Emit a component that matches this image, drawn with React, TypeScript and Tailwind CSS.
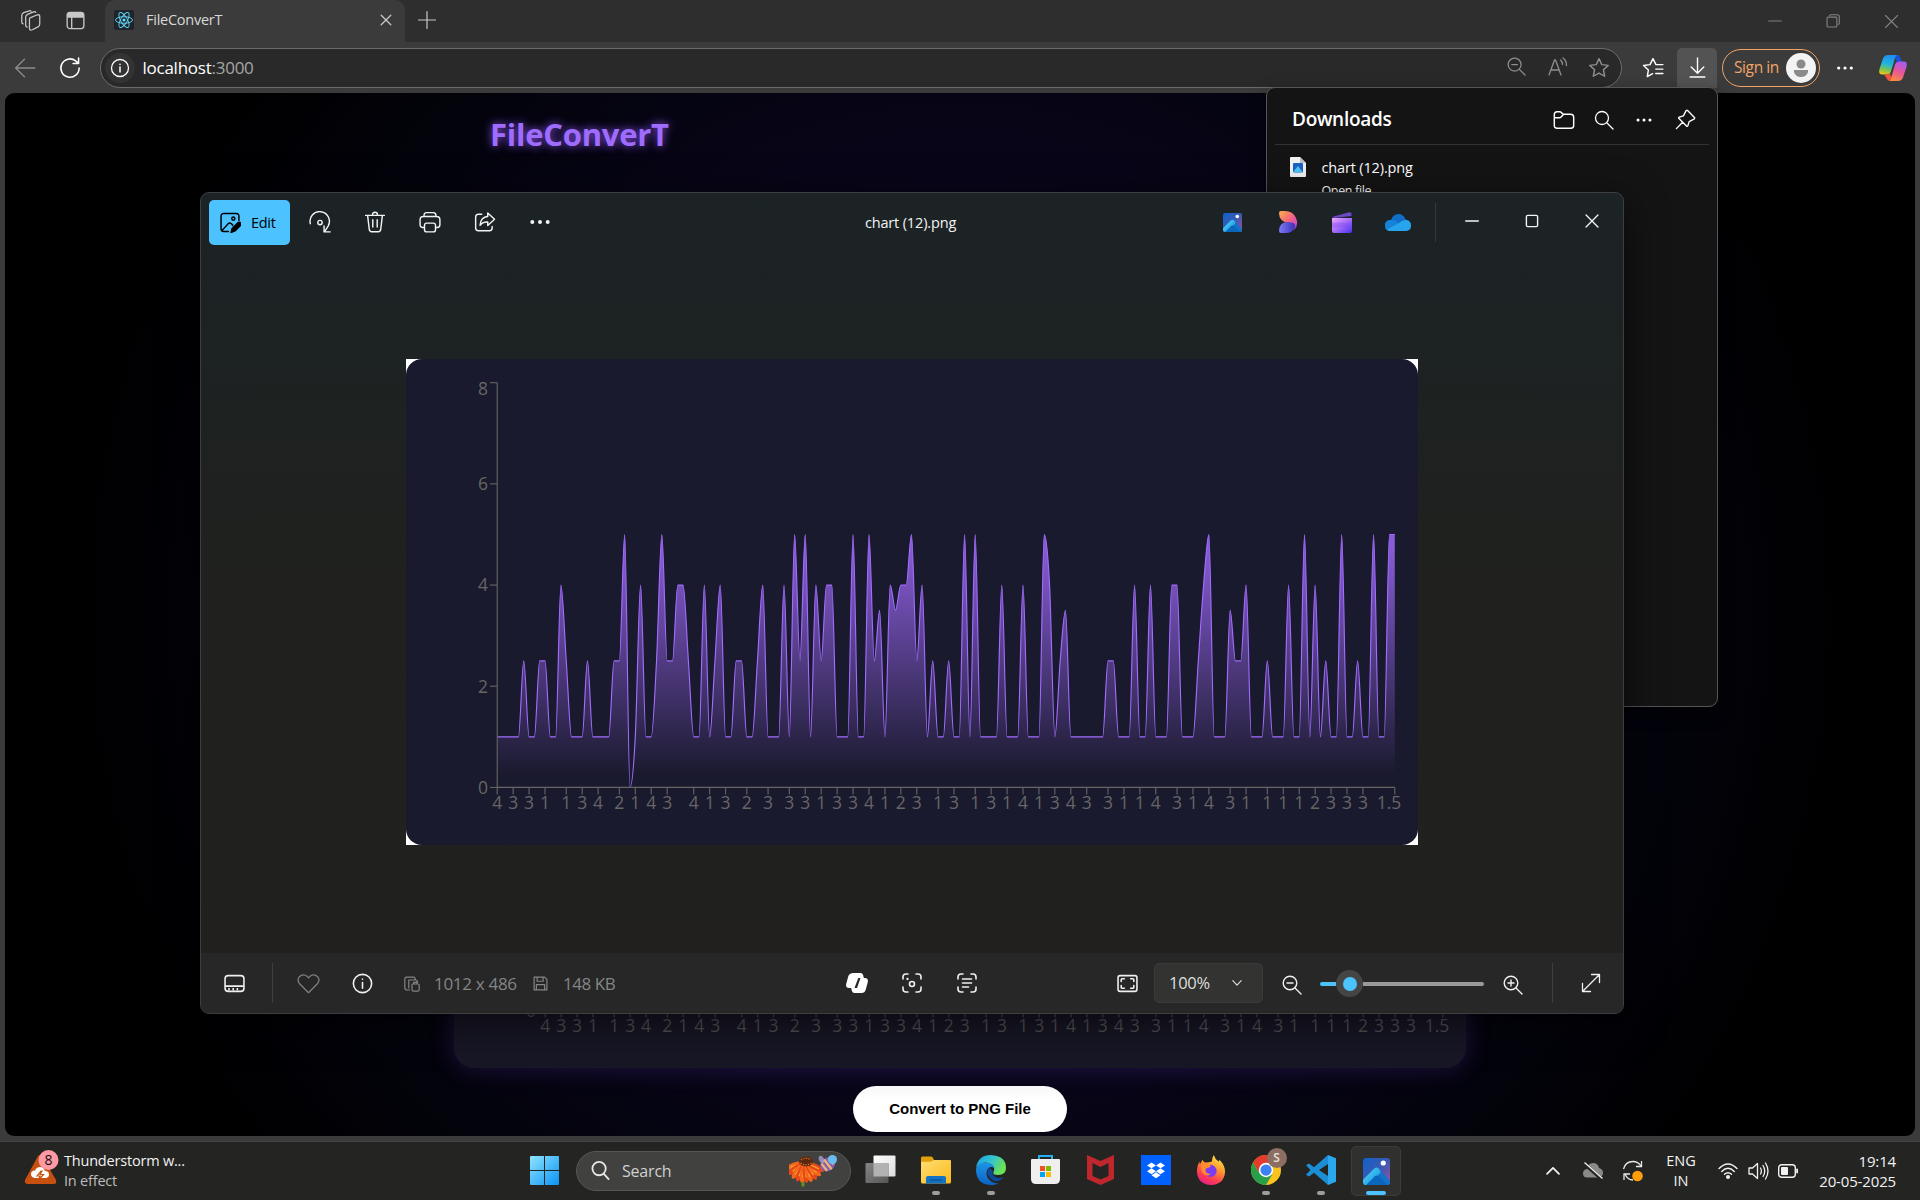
import React from "react";

type IconProps = { size?: number; className?: string; sw?: number; children?: React.ReactNode };

function Icon({ size = 20, className = "", sw = 1.3, children }: IconProps) {
  return (
    <svg width={size} height={size} viewBox="0 0 20 20" fill="none" stroke="currentColor" strokeWidth={sw} strokeLinecap="round" strokeLinejoin="round" className={"shrink-0 " + className}>
      {children}
    </svg>
  );
}

function Dots({ className = "" }: { className?: string }) {
  return (
    <Icon className={className}>
      <g fill="currentColor" stroke="none"><circle cx="3" cy="10" r="1.8" /><circle cx="10" cy="10" r="1.8" /><circle cx="17" cy="10" r="1.8" /></g>
    </Icon>
  );
}

/* ---------- chart ---------- */

// [value, how many consecutive samples hold it]
const runs: [number, number][] = [
  [1, 5], [2.5, 1], [1, 2], [2.5, 2], [1, 2], [4, 1], [2.5, 1], [1, 3], [2.5, 1], [1, 4], [2.5, 2], [5, 1], [0, 1], [1, 1], [4, 1],
  [1, 2], [2.5, 1], [5, 1], [2.5, 2], [4, 2], [2.5, 1], [1, 2], [4, 1], [1, 1], [2.5, 1], [4, 1], [1, 2], [2.5, 2], [1, 2], [2.5, 1],
  [4, 1], [1, 3], [4, 1], [1, 1], [5, 1], [2.5, 1], [5, 1], [1, 1], [4, 1], [2.5, 1], [4, 2], [1, 3], [5, 1], [1, 2], [5, 1], [2.5, 1],
  [3.5, 1], [1, 1], [4, 1], [3.5, 1], [4, 2], [5, 1], [2.5, 1], [4, 1], [1, 1], [2.5, 1], [1, 2], [2.5, 1], [1, 2], [5, 1], [1, 1], [5, 1],
  [1, 4], [4, 1], [1, 3], [4, 1], [1, 3], [5, 1], [4, 1], [1, 1], [2.5, 1], [3.5, 1], [1, 7], [2.5, 2], [1, 3], [4, 1], [1, 2], [4, 1],
  [1, 3], [4, 2], [1, 3], [2.5, 1], [4, 1], [5, 1], [1, 3], [3.5, 1], [2.5, 2], [4, 1], [1, 3], [2.5, 1], [1, 3], [4, 1], [1, 2], [5, 1],
  [1, 1], [4, 1], [1, 1], [2.5, 1], [1, 2], [5, 1], [1, 2], [2.5, 1], [1, 2], [5, 1], [1, 2], [5, 2],
];
const values = runs.flatMap(([v, n]) => Array<number>(n).fill(v));

const ticks: [number, string][] = [
  [0, "4"], [3, "3"], [6, "3"], [9, "1"], [13, "1"], [16, "3"], [19, "4"], [23, "2"], [26, "1"], [29, "4"], [32, "3"], [37, "4"], [40, "1"],
  [43, "3"], [47, "2"], [51, "3"], [55, "3"], [58, "3"], [61, "1"], [64, "3"], [67, "3"], [70, "4"], [73, "1"], [76, "2"], [79, "3"],
  [83, "1"], [86, "3"], [90, "1"], [93, "3"], [96, "1"], [99, "4"], [102, "1"], [105, "3"], [108, "4"], [111, "3"], [115, "3"], [118, "1"],
  [121, "1"], [124, "4"], [128, "3"], [131, "1"], [134, "4"], [138, "3"], [141, "1"], [145, "1"], [148, "1"], [151, "1"], [154, "2"],
  [157, "3"], [160, "3"], [163, "3"], [169, "1.5"],
];

const X0 = 91.2;
const X1 = 988.8;
const Y0 = 428.4;
const Y8 = 23.7;
const px = (i: number) => X0 + ((X1 - X0) * i) / 169;
const py = (v: number) => Y0 - ((Y0 - Y8) * v) / 8;

function monotonePath(vals: number[]) {
  const h = px(1) - px(0);
  const ys = vals.map(py);
  const n = ys.length;
  const s = ys.slice(1).map((y, i) => (y - ys[i]) / h);
  const m = ys.map((_, i) => {
    if (i === 0 || i === n - 1) return 0;
    const a = s[i - 1];
    const b = s[i];
    return (Math.sign(a) + Math.sign(b)) * Math.min(Math.abs(a), Math.abs(b), 0.5 * Math.abs((a + b) / 2)) || 0;
  });
  let d = `M${px(0).toFixed(2)},${ys[0].toFixed(2)}`;
  for (let i = 1; i < n; i++) {
    const a = px(i - 1);
    const b = px(i);
    d += `C${(a + h / 3).toFixed(2)},${(ys[i - 1] + (m[i - 1] * h) / 3).toFixed(2)} ${(b - h / 3).toFixed(2)},${(ys[i] - (m[i] * h) / 3).toFixed(2)} ${b.toFixed(2)},${ys[i].toFixed(2)}`;
  }
  return d;
}
const line = monotonePath(values);

function Chart({ id, yLabels }: { id: string; yLabels: number[] }) {
  return (
    <svg width="1012" height="486" viewBox="0 0 1012 486" className="block">
      <defs>
        <linearGradient id={id} x1="0" y1="0" x2="0" y2="1">
          <stop offset="5%" stopColor="#a26cff" stopOpacity="0.8" />
          <stop offset="95%" stopColor="#a26cff" stopOpacity="0" />
        </linearGradient>
      </defs>
      <path d={`${line}L${X1},${Y0}L${X0},${Y0}Z`} fill={`url(#${id})`} />
      <path d={line} fill="none" stroke="#a26cff" strokeWidth="1.15" />
      <g stroke="#666" strokeWidth="1.1">
        <path d={`M${X0},${Y8}V${Y0}H${X1}`} fill="none" />
        {[0, 2, 4, 6, 8].map((v) => <path key={v} d={`M84,${py(v)}H${X0}`} />)}
        {ticks.map(([i]) => <path key={i} d={`M${px(i)},${Y0}v7`} />)}
      </g>
      <g fill="#666" fontSize="17.5">
        {yLabels.map((v) => <text key={v} x="82" y={v === 8 ? 36 : py(v) + 6.3} textAnchor="end">{v}</text>)}
        {ticks.map(([i, t]) => <text key={i} x={i === 169 ? 983 : px(i)} y="450" textAnchor="middle">{t}</text>)}
      </g>
    </svg>
  );
}

/* ---------- shared drawings ---------- */

function PhotosIcon({ size }: { size: number }) {
  return (
    <svg width={size} height={size} viewBox="0 0 26 26" className="shrink-0">
      <defs>
        <linearGradient id="phBg" x1="0" y1="0" x2="1" y2="1"><stop stopColor="#0f62c8" /><stop offset=".5" stopColor="#3a5ab4" /><stop offset="1" stopColor="#9a529c" /></linearGradient>
        <linearGradient id="phM" x1="0" y1="0" x2="1" y2="1"><stop stopColor="#5be0fb" /><stop offset="1" stopColor="#0a86dc" /></linearGradient>
        <clipPath id="phClip"><rect width="26" height="26" rx="3" /></clipPath>
      </defs>
      <g clipPath="url(#phClip)">
        <rect width="26" height="26" fill="url(#phBg)" />
        <path d="M11 10q2-2 4 0L27 23v5H16z" fill="#1173c9" />
        <path d="M-1 22L11 10q2-1.800 4 0l1.500 2q1 1.500-.3 3L3 28h-4z" fill="url(#phM)" />
        <path d="M2 27l9.500-9.500q1.800-1.500 3.600 0L25 27z" fill="#0b66bd" />
        <circle cx="19.500" cy="4.800" r="2.500" fill="#fff" />
      </g>
    </svg>
  );
}

function Copilot() {
  return (
    <svg width="28" height="26" viewBox="0 0 28 26" className="shrink-0">
      <defs>
        <linearGradient id="cpA" x1=".4" y1="0" x2=".2" y2="1"><stop stopColor="#1e8ff0" /><stop offset=".45" stopColor="#22b6d8" /><stop offset=".75" stopColor="#7fc64a" /><stop offset="1" stopColor="#f5c518" /></linearGradient>
        <linearGradient id="cpB" x1=".7" y1="0" x2=".3" y2="1"><stop stopColor="#a45cf0" /><stop offset=".5" stopColor="#e8569a" /><stop offset="1" stopColor="#fb8a3c" /></linearGradient>
      </defs>
      <path d="M15 0h3.500q2 0 2.700 2l1.500 5h-5z" fill="#1b4fd8" />
      <path d="M9 0h9q-1.500 1-2.200 3.500l-4 13.500q-.9 2.500-3.500 2.500H3Q-.8 19.500.5 14L4 3.500Q5.300 0 9 0z" fill="url(#cpA)" />
      <path d="M19 26H10q1.500-1 2.200-3.500l4-13.500Q17.100 6.500 19.700 6.500H25q3.800 0 2.500 5.500L24 22.500Q22.700 26 19 26z" fill="url(#cpB)" />
      <path d="M5 19.500h4.500l1.500-1 1.200 3.500-1 4q-2.700 0-3.700-3z" fill="#f2533c" />
    </svg>
  );
}

function ReactLogo() {
  return (
    <svg width="20" height="20" viewBox="0 0 20 20">
      <rect width="20" height="20" rx="2" fill="#20232a" />
      <g fill="none" stroke="#61dafb" strokeWidth=".9">
        <ellipse cx="10" cy="10" rx="8.500" ry="3.300" />
        <ellipse cx="10" cy="10" rx="8.500" ry="3.300" transform="rotate(60 10 10)" />
        <ellipse cx="10" cy="10" rx="8.500" ry="3.300" transform="rotate(120 10 10)" />
      </g>
      <circle cx="10" cy="10" r="1.600" fill="#61dafb" />
    </svg>
  );
}

/* ---------- browser ---------- */

function TitleBar() {
  return (
    <div className="flex h-[42px] shrink-0 items-stretch bg-[#2e2e2e] text-[#c8c8c8]">
      <div className="flex w-[105px] items-center pb-[2px] pl-[20px]">
        <Icon size={21} sw={1.2}>
          <path d="M9.500 7.500l6.500-2.700q2.800-1 2.800 1.500v7q0 2-1.700 2.800l-5.300 2.700q-2.800 1.200-2.800-1.500V9.300q0-1.200.5-1.800zM5.400 14.500V7q0-2 1.800-2.800l5.800-2.400q1.500-.5 2 .5M1.700 11.500V5.200q0-1.800 1.800-2.700L9 .8q1-.3 1.500.3M5.400 14.500q0 1.500 1.500 1.700M1.700 11.500q0 1.500 1.300 1.800" />
        </Icon>
        <Icon size={19} sw={1.4} className="ml-[25px]">
          <rect x="1.200" y="1.500" width="17.600" height="17" rx="3" /><path d="M2 2.500h16v3.800H2z" fill="currentColor" /><path d="M6 6v12" />
        </Icon>
      </div>
      <div className="flex w-[300px] items-center rounded-t-[10px] bg-[#3b3b3b] pb-[3px] pl-[9px] pr-[11px]">
        <ReactLogo />
        <span className="ml-[12px] flex-1 text-[14.500px] tracking-[-0.250px] text-[#d8d8d8]">FileConverT</span>
        <Icon size={16} sw={1.6}><path d="M4 4l12 12M16 4L4 16" /></Icon>
      </div>
      <div className="flex w-[44px] items-center justify-center pb-[3px]"><Icon size={20} sw={1.2}><path d="M10 1.500v17M1.500 10h17" /></Icon></div>
      <div className="ml-auto flex items-center text-[#828282]">
        <div className="flex w-[58px] justify-center"><Icon size={14} sw={1.4}><path d="M1 10h18" /></Icon></div>
        <div className="flex w-[58px] justify-center"><Icon size={14} sw={1.6}><rect x="1.500" y="4.500" width="14" height="14" rx="1.500" /><path d="M5 2q.5-1 2-1h9q3 0 3 3v9q0 1.500-1.500 2" /></Icon></div>
        <div className="flex w-[58px] justify-center"><Icon size={15} sw={1.5}><path d="M2 2l16 16M18 2L2 18" /></Icon></div>
      </div>
    </div>
  );
}

const STAR = "M10 1.500l2.500 5.400 5.900.7-4.400 4 1.200 5.900L10 14.600l-5.200 2.900L6 11.600l-4.400-4 5.900-.7z";

function Toolbar() {
  return (
    <div className="flex h-[51px] shrink-0 items-center bg-[#3b3b3b] text-white">
      <div className="flex w-[50px] justify-center"><Icon size={22} className="text-[#8c8c8c]" sw={1.2}><path d="M19 10H1.500M9.500 2L1.500 10l8 8" /></Icon></div>
      <div className="flex w-[40px] justify-center"><Icon size={22} sw={1.4}><path d="M18.300 10a8.300 8.300 0 1 1-3.200-6.500l2.500 2.300M17.800 1v5h-5" /></Icon></div>
      <div className="ml-[10px] flex h-[40px] w-[1522px] items-center rounded-full border border-[#6c6c6c] bg-[#292929] pl-[4px] pr-[2px]">
        <div className="flex h-[30px] w-[30px] items-center justify-center rounded-full bg-[#333]">
          <Icon size={20}><circle cx="10" cy="10" r="8.500" /><path d="M10 9v5M10 6.300v.2" strokeWidth="1.500" /></Icon>
        </div>
        <span className="ml-[7.500px] flex-1 text-[17px] tracking-[-0.250px]">localhost<span className="text-[#a5a5a5]">:3000</span></span>
        <div className="flex text-[#8f8f8f]">
          <div className="flex w-[41px] justify-center"><Icon size={19}><circle cx="8" cy="8" r="6.800" /><path d="M13 13l6 6M5 8h6" /></Icon></div>
          <div className="flex w-[41px] justify-center"><Icon><path d="M1 18L6.500 3h1L13 18M3 13h8M12.500 3q2 1.500 2 4.500M15 1q3.500 2.500 3.500 7.500" /></Icon></div>
          <div className="flex w-[41px] justify-center"><Icon size={22}><path d={STAR} /></Icon></div>
        </div>
      </div>
      <div className="ml-[8px] flex w-[46px] justify-center">
        <Icon size={22}><path d="M9.700 15.200l-4.900 2.600 1-5.900-4.400-4.200 5.900-.8L10 1.500l2.700 5.400H19M12.500 11h6.500M12.500 15h6.500" /></Icon>
      </div>
      <div className="ml-[1px] flex h-[40px] w-[40px] items-center justify-center rounded-t-[5px] bg-[#535353]">
        <Icon size={21}><path d="M10 1v14M4 9.500l6 6 6-6M3 19h14" /></Icon>
      </div>
      <div className="ml-[5px] flex h-[38px] w-[98px] items-center justify-between rounded-full border-[1.500px] border-[#f0a467] pl-[11px] pr-[3px]">
        <span className="whitespace-nowrap text-[15.500px] tracking-[-0.400px] text-[#f0a467]">Sign in</span>
        <svg width="30" height="30" viewBox="0 0 30 30" className="shrink-0"><circle cx="15" cy="15" r="15" fill="#f3f3f3" /><circle cx="15" cy="11" r="4.500" fill="#8a8a8a" /><path d="M8 17h14v2q-1.500 5-7 5t-7-5z" fill="#8a8a8a" /></svg>
      </div>
      <div className="flex w-[50px] justify-center"><Dots className="scale-[0.9]" /></div>
      <div className="ml-[9px]"><Copilot /></div>
    </div>
  );
}

function WebPage() {
  return (
    <div className="flex h-[1043px] flex-col items-center overflow-hidden rounded-[9px] bg-[radial-gradient(circle_at_center,#090720_20%,#070516_46%,#03030c_64%,#000_83%)]">
      <div className="flex h-[82px] w-[940px] items-center">
        <h1 className="text-[31px] font-bold tracking-[-0.250px] text-[#a06cff] [text-shadow:0_0_10px_#8a55f0]">FileConverT</h1>
      </div>
      <div className="mt-[407px] h-[486px] w-[1012px] shrink-0 rounded-[20px] bg-[#181726] shadow-[0_0_25px_rgba(125,80,230,0.25)]">
        <div className="opacity-75"><Chart id="pageFill" yLabels={[0]} /></div>
      </div>
      <button className="mt-[18px] h-[46px] w-[214px] shrink-0 rounded-[23px] bg-[linear-gradient(#f7f7f7,#fff_30%)] font-['Liberation_Sans',Arial,sans-serif] text-[15px] font-bold text-black">Convert to PNG File</button>
    </div>
  );
}

function Downloads() {
  return (
    <div className="absolute left-[1266px] top-[87px] h-[620px] w-[452px] rounded-[9px] border border-[#565656] bg-[#141414] px-[8px] text-white shadow-[0_6px_16px_rgba(0,0,0,0.5)]">
      <div className="flex h-[57px] items-center border-b border-[#333] pl-[17px] pr-[3px] pt-[7px]">
        <span className="flex-1 text-[19px] font-semibold tracking-[-0.300px]">Downloads</span>
        <div className="flex w-[40px] justify-center"><Icon size={22}><path d="M1.200 5q0-2.500 2.500-2.500H6q1 0 1.700.8l1.500 1.500H16q2.800 0 2.800 2.700V15q0 2.500-2.500 2.500H3.700q-2.500 0-2.500-2.500zM1.200 8h4.500q1 0 1.700-.8l1.900-2" /></Icon></div>
        <div className="flex w-[40px] justify-center"><Icon size={20}><circle cx="8" cy="8" r="6.500" /><path d="M13 13l6 6" /></Icon></div>
        <div className="flex w-[40px] justify-center"><Dots className="scale-[0.85]" /></div>
        <div className="flex w-[42px] justify-center"><Icon size={21}><path d="M12 1.500L18.500 8q.7 1-.5 1.700L13.500 12l-1.300 4q-.5 1-1.300.2L3.800 9.100Q3 8.300 4 7.800l4-1.300L10.300 2q.7-1.200 1.700-.5zM7.300 12.700L1.300 18.700" /></Icon></div>
      </div>
      <div className="flex pl-[14.500px] pt-[12px]">
        <svg width="16" height="20" viewBox="0 0 16 20"><path d="M0 1q0-1 1-1h9l6 6v13q0 1-1 1H1q-1 0-1-1z" fill="#f2f2f2" /><path d="M10 0v6h6z" fill="#b9c2cc" /><rect x="3" y="6" width="10" height="9.500" rx="1" fill="#1b62c4" /><path d="M3 15l5-6 5 6.500z" fill="#4dc3f5" /></svg>
        <div className="ml-[16px] flex flex-col">
          <span className="text-[14.500px] leading-[22px] tracking-[-0.150px]">chart (12).png</span>
          <span className="mt-[3px] text-[12.500px] leading-[18px] tracking-[-0.350px]">Open file</span>
        </div>
      </div>
    </div>
  );
}

/* ---------- photo viewer ---------- */

function Slot({ children, w = "w-[55px]" }: { children: React.ReactNode; w?: string }) {
  return <div className={"flex shrink-0 items-center justify-center " + w}>{children}</div>;
}

function PhotoWindow() {
  return (
    <div className="absolute left-[200px] top-[192px] flex h-[822px] w-[1424px] flex-col overflow-hidden rounded-[9px] border border-[#3d3e40] bg-[linear-gradient(180deg,#1c2326_0%,#1d2222_20%,#20211e_50%,#21201e_100%)] text-[#f3f3f3] shadow-[0_10px_40px_rgba(0,0,0,0.6)]">
      <div className="grid h-[60px] shrink-0 grid-cols-[1fr_auto_1fr] items-center pb-[2px]">
        <div className="flex items-center pl-[8px]">
          <div className="flex h-[45px] w-[81px] items-center rounded-[5px] bg-[#4cc2ff] pl-[11px] text-black">
            <Icon size={21} sw={1.4}>
              <path d="M18 8V4q0-2.500-2.500-2.500h-12Q1 1.500 1 4v12q0 2.500 2.500 2.500H8M2 17.500l6-6.500q1.300-1.300 2.600 0l1.500 1.500" /><circle cx="12.700" cy="6.300" r="1.500" />
              <path d="M10.500 19.500l1.200-4L17 10.300q1.500-1.200 2.500 0t0 2.500L14.300 18z" fill="currentColor" />
            </Icon>
            <span className="ml-[10px] pt-[1px] text-[14.500px] tracking-[-0.300px]">Edit</span>
          </div>
          <div className="ml-[2px] flex">
            <Slot><Icon size={22}><path d="M1.200 11.500a8.800 8.800 0 1 1 16.200 2.200l-3.200 5M13.700 13.500v5.500h5.500" /><circle cx="10" cy="10.500" r="2" /></Icon></Slot>
            <Slot><Icon size={22}><path d="M1.500 4h17M3.300 4.200l1.500 12.600q.3 2 2 2h6.400q1.700 0 2-2l1.500-12.600M7.700 3.700q0-2.500 2.300-2.500t2.300 2.500M8 8v6.500M12 8v6.500" /></Icon></Slot>
            <Slot><Icon size={22}><path d="M5 15H3.500Q1 15 1 12.500V8q0-3 3-3h12q3 0 3 3v4.500q0 2.500-2.500 2.500H15M4.500 4.500q0-3 2.500-3h6q2.500 0 2.500 3M5 13q0-2 2-2h6q2 0 2 2v4q0 2-2 2H7q-2 0-2-2z" /></Icon></Slot>
            <Slot><Icon size={22}><path d="M7 3H4Q1.500 3 1.500 5.500v10Q1.500 18 4 18h10q2.500 0 2.500-2.500V14M12.500 1.800l6.200 5.700-6.200 5.700v-3.200Q8 9.500 5.500 13 6 5.500 12.500 5z" /></Icon></Slot>
            <Slot><Dots className="scale-110" /></Slot>
          </div>
        </div>
        <span className="mr-[3px] pt-[1px] text-[14.500px] tracking-[-0.150px]">chart (12).png</span>
        <div className="flex items-center justify-end">
          <Slot><PhotosIcon size={19} /></Slot>
          <Slot>
            <svg width="20" height="22" viewBox="0 0 20 22"><defs><linearGradient id="dsA" x1="0" y1="0" x2="1" y2="1"><stop stopColor="#ffb04a" /><stop offset=".5" stopColor="#f4657d" /><stop offset="1" stopColor="#b63df0" /></linearGradient><linearGradient id="dsB"><stop stopColor="#7c7bf5" /><stop offset="1" stopColor="#3c2fb4" /></linearGradient></defs>
              <path d="M1 2q0-2 2-2h4q8 0 11 7t-2 12L11 12Q1 11 1 2z" fill="url(#dsA)" /><path d="M1 20q0-9 9-9t7 6q-3 5-9 5H3q-2 0-2-2z" fill="url(#dsB)" /></svg>
          </Slot>
          <Slot>
            <svg width="21" height="21" viewBox="0 0 21 21"><defs><linearGradient id="clA" x1="0" y1="0" x2="1" y2="1"><stop stopColor="#f0a6ff" /><stop offset=".5" stopColor="#a46cf7" /><stop offset="1" stopColor="#4a2ff0" /></linearGradient></defs>
              <path d="M0 5l17-4.800q2.500-.4 2.500 1.500V4L2 6z" fill="#6a48c8" /><path d="M0 6h20v13q0 2-2 2H2q-2 0-2-2z" fill="url(#clA)" /><path d="M0 10.500h20v5H0z" fill="#7c45f0" opacity=".35" /></svg>
          </Slot>
          <Slot>
            <svg width="26" height="17" viewBox="0 0 26 17"><path d="M6 6Q8 0 13.500 0q5 0 7 5.500Q26 6.500 26 11.500q0 5-5.500 5.500H6q-6 0-6-5.500T6 6z" fill="#0f6fc8" /><path d="M6 6q3-.3 5.500 1.500l9 5.500q1.500 4-1 4H6q-6 0-6-5.500T6 6z" fill="#1783d6" /><path d="M2 15.500L14 9q4-3.500 7.500-3 4.500 1 4.500 5.500 0 5-5.500 5.500H6q-2.500 0-4-1.500z" fill="#28a4ec" /></svg>
          </Slot>
          <div className="ml-[10px] h-[39px] w-px bg-[#343a3c]" />
          <div className="ml-[6px] mr-[1px] flex pb-[2px]">
            <Slot w="w-[60px]"><Icon size={14} sw={2}><path d="M1 10h18" /></Icon></Slot>
            <Slot w="w-[60px]"><Icon size={14} sw={2}><rect x="2" y="2" width="16" height="16" rx="2" /></Icon></Slot>
            <Slot w="w-[60px]"><Icon size={14} sw={1.900}><path d="M1.500 1.500l17 17M18.500 1.500l-17 17" /></Icon></Slot>
          </div>
        </div>
      </div>

      <div className="flex flex-1 items-start justify-center pt-[106px]">
        <div className="bg-white"><div className="rounded-[16px] bg-[#1a1a2e]"><Chart id="photoFill" yLabels={[0, 2, 4, 6, 8]} /></div></div>
      </div>

      <div className="grid h-[60px] shrink-0 grid-cols-[1fr_auto_1fr] items-center bg-[#272727] text-[#f0f0f0]">
        <div className="flex items-center pl-[9px]">
          <Slot w="w-[48px]"><Icon size={21} sw={1.500}><rect x="1" y="2.500" width="18" height="15" rx="3" /><path d="M1.500 12.500h17" /><path d="M4 15.500h12" strokeWidth="2.500" strokeDasharray="1.500 2.500" strokeLinecap="butt" /></Icon></Slot>
          <div className="ml-[14px] h-[40px] w-px bg-[#3f3f3f]" />
          <Slot w="ml-[8px] w-[54px]"><Icon size={23} sw={1.100} className="text-[#808080]"><path d="M10 18L2.300 10.200Q-.3 7 2 4.200 5.500 1 9 4l1 1 1-1q3.500-3 7 .2 2.300 2.800-.3 6z" /></Icon></Slot>
          <Slot w="w-[54px]"><Icon size={21} sw={1.500}><circle cx="10" cy="10" r="8.700" /><path d="M10 9v5.500M10 5.800v.2" /></Icon></Slot>
          <div className="ml-[15px] flex items-center pt-[1px] text-[#858585]">
            <Icon size={16} sw={1.500}><path d="M14 5V4q0-2.500-2.500-2.500h-8Q1 1.500 1 4v10q0 3.500 3 3.500h3M6 15V5h8q3 0 3 3M10 17V11q0-1 1-1h6q2 0 2 2v5q0 2-2 2h-5q-2 0-2-2zM12 10V8h4v2" /></Icon>
            <span className="ml-[14px] w-[85px] whitespace-nowrap pt-[1px] text-[17px] tracking-[-0.300px]">1012 x 486</span>
            <Icon size={15} sw={1.600} className="ml-[14px]"><path d="M1.500 1.500h14l3 3v14h-17zM5.500 1.500V7h8V1.500M4.500 18.500v-7h11v7" /></Icon>
            <span className="ml-[15px] whitespace-nowrap pt-[1px] text-[17px] tracking-[-0.450px]">148 KB</span>
          </div>
        </div>
        <div className="flex">
          <Slot><svg width="22" height="20" viewBox="0 0 22 20"><path d="M7.500 0h7q2 0 2.600 2l.8 3H19q3.600.3 2.800 4l-2 7.500q-1 3.500-4.300 3.500h-7q-2 0-2.600-2l-.8-3H3q-3.600-.3-2.800-4l2-7.500Q3.200 0 7.500 0z" fill="#fff" /><path d="M12.300 5h2.200l-3.500 10H8.500z" fill="#272727" /></svg></Slot>
          <Slot><Icon sw={1.600}><path d="M1 6V4q0-3 3-3h2M14 1h2q3 0 3 3v2M19 14v2q0 3-3 3h-2M6 19H4q-3 0-3-3v-2" /><circle cx="10" cy="11" r="2.500" /><path d="M5.500 5.800v.3" strokeWidth="2.300" /></Icon></Slot>
          <Slot><Icon sw={1.600}><path d="M1 6V4q0-3 3-3h2M14 1h2q3 0 3 3v2M19 14v2q0 3-3 3h-2M6 19H4q-3 0-3-3v-2M5.500 6h9M5.500 10h9M5.500 14h6" /></Icon></Slot>
        </div>
        <div className="flex items-center justify-end">
          <Slot w="w-[54px]"><Icon size={21} sw={1.500}><rect x="1" y="2.500" width="18" height="15" rx="2" /><path d="M4 8V6.500q0-1 1-1h2M13 5.500h2q1 0 1 1V8M16 12v1.500q0 1-1 1h-2M7 14.500H5q-1 0-1-1V12" /></Icon></Slot>
          <div className="flex h-[40px] w-[109px] items-center rounded-[5px] border border-[#3a3a38] bg-[#333331] pl-[14px] text-[#dedede]">
            <span className="w-[43px] pt-[1px] text-[16.500px] tracking-[-0.250px]">100%</span>
            <Icon size={12} className="ml-[19px]" sw={1.900}><path d="M3 6l7 7.500L17 6" /></Icon>
          </div>
          <Slot w="w-[57px] pt-[4px]"><Icon size={20} sw={1.400}><circle cx="8" cy="8" r="6.800" /><path d="M13 13l6 6M5 8h6" /></Icon></Slot>
          <div className="flex w-[164px] items-center pt-[1px]">
            <div className="h-[4px] w-[16px] rounded-l-full bg-[#4cc2ff]" />
            <div className="flex h-[27px] w-[27px] items-center justify-center rounded-full bg-[#454545]"><div className="h-[14px] w-[14px] rounded-full bg-[#4cc2ff]" /></div>
            <div className="h-[4px] flex-1 rounded-r-full bg-[#9a9a9a]" />
          </div>
          <Slot w="w-[58px] pt-[4px]"><Icon size={20} sw={1.400}><circle cx="8" cy="8" r="6.800" /><path d="M13 13l6 6M5 8h6M8 5v6" /></Icon></Slot>
          <div className="ml-[10px] h-[40px] w-px bg-[#3f3f3f]" />
          <Slot w="w-[70px] pl-[6px]"><Icon size={20}><path d="M1.500 18.500l17-17M10.500 1.500h8v8M1.500 10.500v8h8" /></Icon></Slot>
        </div>
      </div>
    </div>
  );
}

/* ---------- taskbar ---------- */

function TaskApp({ children, dot = false }: { children: React.ReactNode; dot?: boolean }) {
  return (
    <div className="flex h-[50px] w-[55px] flex-col items-center justify-end">
      <div className="flex h-[34px] items-center">{children}</div>
      <div className={dot ? "mb-px mt-[4px] h-[4px] w-[8px] rounded-full bg-[#9d9d9b]" : "mb-px mt-[4px] h-[4px] w-[8px]"} />
    </div>
  );
}

const petals = [-78, -58, -40, -22, -6, 10, 26, 44, 62, 80];

function SearchArt() {
  return (
    <svg width="50" height="32" viewBox="0 0 50 32" className="shrink-0">
      <path d="M12.500 26h3v5q-1.500 1.500-3 0z" fill="#5f8f1f" />
      <g transform="translate(16 7)">
        {petals.map((a, i) => (
          <g key={a} transform={`rotate(${a * -0.85 + 4})`}>
            <ellipse cx="0" cy="11.500" rx="3.200" ry="9.500" fill={i % 2 ? "#e8471a" : "#f3681c"} />
            <path d="M0 4v11" stroke="#fba62c" strokeWidth="1.300" strokeLinecap="round" />
          </g>
        ))}
      </g>
      <ellipse cx="17" cy="6.500" rx="7" ry="5" fill="#5c2712" />
      <path d="M12 5q5-3.500 10 0M11.500 8q5.500 3.500 11 0" fill="none" stroke="#c9711f" strokeWidth="1.400" strokeDasharray="1.300 1.300" />
      <g transform="rotate(-38 39 8)">
        <ellipse cx="38" cy="9" rx="8" ry="6.500" fill="#8460b8" />
        <path d="M33.500 4.500v9M38 2.800v12.400M42.500 4.500v8" stroke="#f1b568" strokeWidth="2.200" />
      </g>
      <circle cx="43.500" cy="4.500" r="4.500" fill="#69bdf0" />
      <ellipse cx="32.500" cy="4.500" rx="2.500" ry="3.800" fill="#b4a2dc" opacity=".75" transform="rotate(-25 32.500 4.500)" />
    </svg>
  );
}

function Taskbar() {
  return (
    <div className="flex h-[59px] shrink-0 items-center border-t border-[#454545] bg-[#242422] pb-[1px] text-[#f2f2f2]">
      <div className="flex w-[530px] items-center pl-[24px]">
        <svg width="36" height="36" viewBox="0 0 36 36" className="mb-[5px]">
          <path d="M14 6q2-2 4 0l14 24q1 4-2 4H4q-4 0-3-4z" fill="#c8500f" />
          <path d="M11 28q-4-.5-4-4t4-3.500Q12.500 17 16 17t5 4q4 0 4 3.500T21 28z" fill="#fff" />
          <path d="M17 21l-4 5h3l-1.500 4 5-5.500h-3.500l2-3.500z" fill="#fff" stroke="#c8500f" strokeWidth="1.200" />
          <circle cx="24.500" cy="10" r="10" fill="#ff99a4" />
          <text x="24.500" y="15" textAnchor="middle" fontSize="14" fill="#111">8</text>
        </svg>
        <div className="ml-[4px] flex flex-col text-[14.500px] leading-[20px] tracking-[-0.200px]">
          <span>Thunderstorm w...</span>
          <span className="text-[#bdbdbd]">In effect</span>
        </div>
      </div>
      <svg width="29" height="29" viewBox="0 0 29 29" className="shrink-0"><defs><linearGradient id="win" x1="0" y1="0" x2="1" y2="1"><stop stopColor="#8fe4fd" /><stop offset="1" stopColor="#0a93f5" /></linearGradient></defs>
        <path d="M1 0h13v14H0V1q0-1 1-1zM15 0h13q1 0 1 1v13H15zM0 15h14v14H1q-1 0-1-1zM15 15h14v13q0 1-1 1H15z" fill="url(#win)" /></svg>
      <div className="ml-[17px] flex h-[40px] w-[275px] items-center rounded-full border border-[#565653] bg-[#41413f] pl-[14px] pr-[11px]">
        <Icon size={19} sw={1.900} className="text-[#e8e8e8]"><circle cx="8.500" cy="8" r="7" /><path d="M13.500 13.500l5 5.500" /></Icon>
        <span className="ml-[12px] flex-1 text-[16px] tracking-[-0.200px] text-[#d0d0d0]">Search</span>
        <SearchArt />
      </div>
      <div className="ml-[2px] flex">
        <TaskApp><svg width="31" height="31" viewBox="0 0 31 31"><defs><linearGradient id="tv" x1="0" y1="0" x2="1" y2="1"><stop stopColor="#fff" /><stop offset="1" stopColor="#dcdcdc" /></linearGradient><linearGradient id="tw" x1="0" y1="0" x2="1" y2="1"><stop stopColor="#858585" /><stop offset="1" stopColor="#565656" /></linearGradient></defs><rect x="8.500" y="1.500" width="22" height="21" rx="1" fill="url(#tv)" /><rect x=".5" y="9" width="23" height="20" rx="1" fill="url(#tw)" /><rect x="8.500" y="9" width="15" height="13.500" fill="#b2b2b2" /></svg></TaskApp>
        <TaskApp dot><svg width="30" height="28" viewBox="0 0 30 28"><defs><linearGradient id="fx" x1="0" y1="0" x2="1" y2="1"><stop stopColor="#ffde72" /><stop offset="1" stopColor="#fbb91c" /></linearGradient></defs><path d="M0 2q0-1.500 1.500-1.500H10q1.500 0 2 1.500l1 2v3H0z" fill="#e2a10c" /><path d="M0 6.500q0-.8.800-.8H10l2-1.200q.5-.5 1.500-.5H29q1 0 1 1v21q0 1.500-1.500 1.500h-27Q0 27.500 0 26z" fill="url(#fx)" /><path d="M5 27.500V22q0-2 2-2h16q2 0 2 2v5.500z" fill="#1272c4" /><path d="M9 24h12" stroke="#0a4f94" strokeWidth="1.300" /></svg></TaskApp>
        <TaskApp dot>
          <svg width="30" height="30" viewBox="0 0 30 30"><defs><linearGradient id="eA" x1="0" y1="0" x2="1" y2=".4"><stop stopColor="#1d9fe6" /><stop offset=".55" stopColor="#35c4cf" /><stop offset="1" stopColor="#6be352" /></linearGradient><linearGradient id="eB" x1="0" y1="0" x2="0" y2="1"><stop stopColor="#1d96e6" /><stop offset="1" stopColor="#0b62c4" /></linearGradient></defs>
            <path d="M0 13Q2 0 15 0q15 1 15 13 0 7-8 7-6 0-4.500-3Q19.500 13 16 9.500 10 6 5 8.500 1.500 10 0 13z" fill="url(#eA)" />
            <path d="M0 14Q2 7 9 7.500q8 0 9.500 5.500-5-3-7.500 2-2 8 5 12 4 2 7 1-4 2.500-9 2Q0 29 0 14z" fill="url(#eB)" />
            <path d="M12 14q-2.500 7 5 11.500 5 2 10-2 .8-1.500-.6-1-4.400 1.500-8-1-3-2.500-1.500-5.500Q14 12 12 14z" fill="#0f4a98" />
          </svg>
        </TaskApp>
        <TaskApp><svg width="29" height="29" viewBox="0 0 29 29"><path d="M8 5V1h13v4" fill="none" stroke="#24b0f0" strokeWidth="2" /><path d="M0 5q0-1 1-1h27q1 0 1 1v19q0 5-5 5H5q-5 0-5-5z" fill="#efefef" /><path d="M9 11h5v5H9z" fill="#f25022" /><path d="M15 11h5v5h-5z" fill="#7fba00" /><path d="M9 17h5v5H9z" fill="#00a4ef" /><path d="M15 17h5v5h-5z" fill="#ffb900" /></svg></TaskApp>
        <TaskApp><svg width="27" height="30" viewBox="0 0 27 30"><path d="M0 0l13.500 6L27 0v24l-13.500 6L0 24z" fill="#c0272d" /><path d="M5.500 8l8 4 8-4v13l-8 3.500-8-3.500z" fill="#242422" /></svg></TaskApp>
        <TaskApp><svg width="30" height="30" viewBox="0 0 30 32" preserveAspectRatio="none"><rect width="30" height="32" fill="#0061fe" /><path d="M10.500 8l4.500 3.100-4.500 3.100L6 11.100zM19.500 8l4.500 3.100-4.500 3.100-4.500-3.100zM10.500 14.200l4.500 3.100-4.500 3.100L6 17.300zM19.500 14.200l4.500 3.100-4.500 3.100-4.500-3.100zM15 18.500l4.500 3.100L15 24.700l-4.500-3.100z" fill="#fff" /></svg></TaskApp>
        <TaskApp>
          <svg width="30" height="30" viewBox="0 0 30 32"><defs><linearGradient id="ff" x1=".8" y1="0" x2=".3" y2="1"><stop stopColor="#fff04a" /><stop offset=".4" stopColor="#ff9a2e" /><stop offset=".75" stopColor="#ff3d50" /><stop offset="1" stopColor="#e0208a" /></linearGradient></defs>
            <path d="M18 0q1 4 5 7 1-1 1-2 6 6 6 13-1 13-15 14Q1 31 0 18q0-7 3-11v3l3-5q1 3 4 3 3 0 6-1 0-4 2-7z" fill="url(#ff)" /><circle cx="14.500" cy="17" r="6.500" fill="#7b3df0" /><path d="M5 10q4-2 9 1 2 2-2 2.500-3 .5-3 3 1 4 6 3.500-3 3-7 1-5-4-3-11z" fill="#ff8a30" />
          </svg>
        </TaskApp>
        <TaskApp dot>
          <div className="relative">
            <svg width="30" height="30" viewBox="0 0 32 32"><circle cx="16" cy="16" r="16" fill="#fcc31e" /><path d="M2.100 8A16 16 0 0 1 29.900 8L16 8.500 9 20z" fill="#e33b2e" /><path d="M2.100 8A16 16 0 0 0 16 32l7-12-7 3.500-7.500-4.500z" fill="#2a9f49" /><circle cx="16" cy="16" r="7.700" fill="#fff" /><circle cx="16" cy="16" r="6" fill="#3c82f2" /></svg>
            <span className="absolute -right-[6px] -top-[7px] flex h-[20px] w-[20px] items-center justify-center rounded-full bg-[#8d6e63] text-[12px] font-semibold text-[#e8e0dc]">S</span>
          </div>
        </TaskApp>
        <TaskApp dot><svg width="30" height="30" viewBox="0 0 30 32" preserveAspectRatio="none"><path d="M22 0L8 13 3 9 0 11l4.500 5L0 21l3 2 5-4 14 13V22.500L13 16l9-6.500z" fill="#1b8fd6" /><path d="M22 0l8 3.500v25L22 32z" fill="#2ba7ee" /></svg></TaskApp>
      </div>
      <div className="ml-[3px] flex h-[50px] w-[50px] flex-col items-center rounded-[5px] border border-[#3c3c3a] bg-[#30302e] pt-[11px]">
        <PhotosIcon size={27} />
        <div className="mt-[6px] h-[4px] w-[20px] shrink-0 rounded-full bg-[#4cc2ff]" />
      </div>
      <div className="ml-auto flex items-center pr-[24px]">
        <Slot w="w-[40px]"><Icon size={14} sw={2.500}><path d="M1.500 14L10 5.500l8.500 8.500" /></Icon></Slot>
        <Slot w="w-[40px]"><svg width="22" height="18" viewBox="0 0 22 18"><path d="M5 7Q6 1 11 1t6 5q4 1 4 5t-5 4.500H5Q1 15.500 1 11.500T5 7z" fill="#8a8a88" /><path d="M1.500 1l18 16" stroke="#242422" strokeWidth="3.500" /><path d="M2.500 .5l18 16" stroke="#eee" strokeWidth="1.300" /></svg></Slot>
        <Slot w="w-[40px]"><svg width="22" height="22" viewBox="0 0 22 22" fill="none" stroke="#e8e8e8" strokeWidth="1.300"><path d="M1.500 9Q3.500 1.500 11 1.500q5 0 8 4.500M19.500 1v5.500H14M3 14q2.500 6 8 6M2 20v-6h6" /><circle cx="15.500" cy="16" r="5.300" fill="#ff9d0a" stroke="none" /></svg></Slot>
        <div className="ml-[8px] w-[40px] text-center text-[14.500px] leading-[20px]"><div>ENG</div><div>IN</div></div>
        <Slot w="ml-[12px] w-[30px]"><svg width="20" height="16" viewBox="0 0 20 16" fill="none" stroke="#f2f2f2" strokeWidth="1.400" strokeLinecap="round"><path d="M1 5.500Q10-3.500 19 5.500M3.700 8.500q6.300-6.300 12.600 0M6.500 11.300q3.500-3.300 7 0" /><circle cx="10" cy="14" r="1.300" fill="#f2f2f2" /></svg></Slot>
        <Slot w="w-[30px]"><svg width="21" height="18" viewBox="0 0 21 18" fill="none" stroke="#f2f2f2" strokeWidth="1.300" strokeLinecap="round" strokeLinejoin="round"><path d="M1 6h3.500L9.500 1.500v15L4.500 12H1zM12.500 6q1.800 3 0 6M15 3.500q3.500 5.500 0 11M17.500 1q5 8 0 16" /></svg></Slot>
        <Slot w="w-[30px]"><svg width="20" height="14" viewBox="0 0 20 14"><rect x=".7" y=".7" width="16.600" height="12.600" rx="3" fill="none" stroke="#f2f2f2" strokeWidth="1.400" /><rect x="3" y="3" width="7" height="8" rx="1" fill="#f2f2f2" /><rect x="18.200" y="4.500" width="1.800" height="5" rx=".9" fill="#f2f2f2" /></svg></Slot>
        <div className="ml-[14px] w-[79px] whitespace-nowrap text-right text-[15px] leading-[20px] tracking-[-0.150px]"><div>19:14</div><div>20-05-2025</div></div>
      </div>
    </div>
  );
}

export default function App() {
  return (
    <div className="relative flex h-[1200px] w-[1920px] flex-col overflow-hidden bg-[#3b3b3b] font-['Open_Sans',sans-serif]">
      <TitleBar />
      <Toolbar />
      <div className="h-[1048px] shrink-0 px-[5px]"><WebPage /></div>
      <Taskbar />
      <Downloads />
      <PhotoWindow />
    </div>
  );
}
